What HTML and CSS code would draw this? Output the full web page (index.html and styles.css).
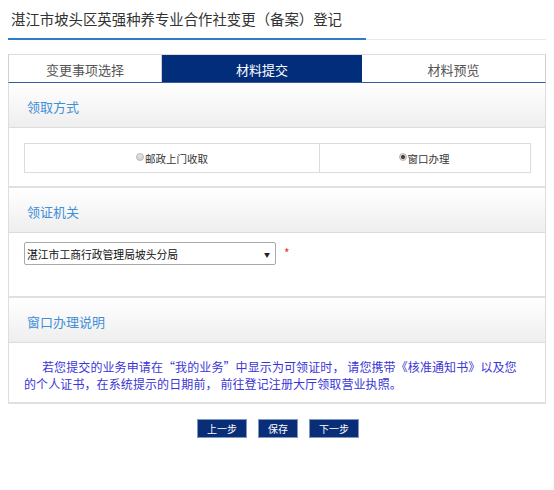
FILE: index.html
```html
<!DOCTYPE html>
<html lang="zh-CN">
<head>
<meta charset="utf-8">
<title>变更登记</title>
<link rel="stylesheet" href="styles.css">
</head>
<body>
<div class="page">
  <h1 class="title">湛江市坡头区英强种养专业合作社变更（备案）登记</h1>
  <div class="title-rule"><span class="rule-blue"></span><span class="rule-gray"></span></div>

  <div class="tabs">
    <div class="tab tab-1">变更事项选择</div>
    <div class="tab tab-2 active">材料提交</div>
    <div class="tab tab-3">材料预览</div>
  </div>

  <div class="panel">
    <section class="sec">
      <div class="sec-head">领取方式</div>
      <div class="sec-body sec-body-1">
        <div class="choice">
          <div class="choice-cell cell-a"><span class="radio"></span><span class="choice-text">邮政上门收取</span></div>
          <div class="choice-cell cell-b"><span class="radio checked"></span><span class="choice-text">窗口办理</span></div>
        </div>
      </div>
    </section>

    <section class="sec">
      <div class="sec-head">领证机关</div>
      <div class="sec-body sec-body-2">
        <div class="field">
          <div class="select"><span class="select-text">湛江市工商行政管理局坡头分局</span><span class="select-arrow">▼</span></div>
          <span class="required">*</span>
        </div>
      </div>
    </section>

    <section class="sec">
      <div class="sec-head">窗口办理说明</div>
      <div class="sec-body sec-body-3">
        <p class="note">若您提交的业务申请在“我的业务”中显示为可领证时， 请您携带《核准通知书》以及您<br>的个人证书，在系统提示的日期前， 前往登记注册大厅领取营业执照。</p>
      </div>
    </section>
  </div>

  <div class="actions">
    <button class="btn btn-wide" type="button">上一步</button>
    <button class="btn btn-narrow" type="button">保存</button>
    <button class="btn btn-wide" type="button">下一步</button>
  </div>
</div>
</body>
</html>
```

FILE: styles.css
```css
* { box-sizing: border-box; }

html, body {
  margin: 0;
  padding: 0;
  background: #fff;
}

body {
  font-family: "Noto Sans CJK SC", "Noto Sans", "Liberation Sans", sans-serif;
  color: #333;
}

.page {
  padding: 0 8px;
}

.title {
  margin: 0;
  height: 38px;
  line-height: 38px;
  padding-left: 3px;
  font-size: 14.4px;
  font-weight: normal;
  color: #333;
  white-space: nowrap;
}

.title-rule {
  display: flex;
  align-items: flex-end;
  height: 2px;
}

.rule-blue {
  width: 358px;
  height: 2px;
  background: #2f7dc6;
}

.rule-gray {
  flex: 1;
  height: 1px;
  background: #e2ebf4;
}

.tabs {
  display: flex;
  margin-top: 14px;
  height: 29px;
  border-top: 1px solid #dcdcdc;
  border-left: 1px solid #d0d0d0;
  border-right: 1px solid #d0d0d0;
  border-bottom: 1px solid #3b5a99;
}

.tab {
  display: flex;
  align-items: center;
  justify-content: center;
  font-size: 13px;
  color: #555;
  padding-top: 2px;
}

.tab-1 { width: 153px; border-right: 1px solid #cfcfcf; }
.tab-2 { width: 200px; }
.tab-3 { flex: 1; }

.tab.active {
  background: #022d7b;
  color: #fff;
}

.panel {
  border-left: 1px solid #dedede;
  border-right: 1px solid #dedede;
}

.sec {
  border-bottom: 2px solid #e0e0e0;
}

.sec-head {
  height: 45px;
  padding: 2px 0 0 18px;
  display: flex;
  align-items: center;
  font-size: 13px;
  color: #3f8fd6;
  background: linear-gradient(to bottom, #ffffff 0%, #f7f7f7 50%, #eeeeee 100%);
  border-bottom: 1px solid #dcdcdc;
}

.sec-body {
  background: #fff;
}

.sec-body-1 {
  padding: 15px 0 13px 15px;
}

.choice {
  display: flex;
  width: 507px;
  height: 30px;
  border: 1px solid #dcdcdc;
}

.choice-cell {
  display: flex;
  align-items: center;
  justify-content: center;
  font-size: 10.5px;
  color: #333;
}

.cell-a {
  width: 295px;
  border-right: 1px solid #dcdcdc;
}

.cell-b {
  flex: 1;
  padding-right: 2px;
}

.radio {
  width: 8px;
  height: 8px;
  border-radius: 50%;
  border: 1px solid #b5b5b5;
  background: linear-gradient(#e6e6e6, #cfcfcf);
  margin-right: 1px;
  position: relative;
  top: -1px;
}

.radio.checked {
  background: radial-gradient(circle, #444 0 1.8px, #d8d8d8 2.3px);
}

.sec-body-2 {
  padding: 9px 0 31px 15px;
}

.field {
  display: flex;
  align-items: flex-start;
}

.select {
  display: flex;
  align-items: center;
  justify-content: space-between;
  width: 252px;
  height: 23px;
  padding: 1px 5px 0 2px;
  border: 1px solid #a9a9a9;
  border-radius: 2px;
  background: #fff;
  font-size: 10.8px;
  color: #111;
}

.select-arrow {
  font-size: 6px;
  color: #222;
}

.required {
  margin-left: 8px;
  margin-top: 5px;
  font-size: 12px;
  color: #e33;
  line-height: 1;
}

.sec-body-3 {
  padding: 16px 0 10px 15px;
}

.note {
  margin: 0;
  font-size: 12px;
  letter-spacing: 0.1px;
  line-height: 16.5px;
  color: #3a36d6;
  text-indent: 18px;
  white-space: nowrap;
}

.actions {
  display: flex;
  justify-content: center;
  gap: 11px;
  margin-top: 15px;
  padding-left: 2px;
}

.btn {
  height: 19px;
  padding: 0;
  border: 1px solid #8197c2;
  background: #0a2d78;
  color: #fff;
  font-family: "Noto Sans CJK SC", sans-serif;
  font-size: 10px;
  line-height: 17px;
  cursor: pointer;
}

.btn-wide { width: 50px; }
.btn-narrow { width: 40px; }
```
